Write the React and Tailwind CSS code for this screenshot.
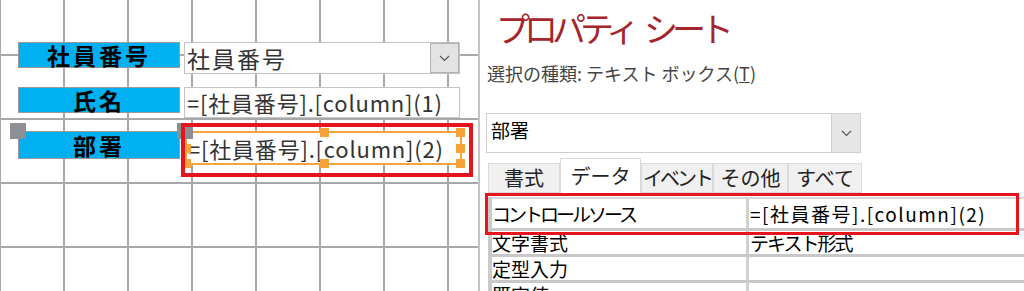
import React from 'react';

const Chevron = () => (
  <svg width="11" height="7" viewBox="0 0 11 7" fill="none">
    <path d="M1 1l4.5 4.5L10 1" stroke="#555" strokeWidth="1.2" />
  </svg>
);

const labelCls =
  'w-[162px] bg-[#00b0f0] border border-[#9a9a9a] flex items-center justify-center text-[23px] font-bold tracking-[3px] text-black';

const tabs = [
  { label: '書式', w: 'w-[72px]' },
  { label: 'データ', w: 'w-[81px]', active: true },
  { label: 'イベント', w: 'w-[72px]', tight: true },
  { label: 'その他', w: 'w-[75px]' },
  { label: 'すべて', w: 'w-[74px]' },
];

const rows = [
  { name: 'コントロールソース', value: '=[社員番号].[column](2)', h: 'h-[29px] leading-[29px]', first: true },
  { name: '文字書式', value: 'テキスト形式', h: 'h-[23px] leading-[23px]' },
  { name: '定型入力', value: '', h: 'h-[23px] leading-[23px]' },
  { name: '既定値', value: '', h: 'h-[23px] leading-[23px]' },
];

function Handle({ className }) {
  return <div className={`absolute w-[9px] h-[9px] bg-[#f7a33b] ${className}`} />;
}

export default function App() {
  return (
    <div className="w-[1024px] h-[291px] flex overflow-hidden bg-white font-['Noto_Sans_CJK_JP','Noto_Sans',sans-serif]">
      {/* form design canvas */}
      <div className="relative w-[478px] h-full shrink-0 bg-white [background-image:linear-gradient(to_right,#a8a8a8_2px,transparent_2px),linear-gradient(to_bottom,#a8a8a8_2px,transparent_2px)] [background-size:64px_64px] [background-position:63px_54px]">
        <div className="flex flex-col pt-[42px] pl-[18px]">
          <div className="flex items-start gap-[4px]">
            <div className={`${labelCls} h-[26px]`}>社員番号</div>
            <div className="w-[276px] h-[32px] bg-white border border-[#c4c4c4] flex items-center">
              <span className="flex-1 pl-[2px] text-[23px] tracking-[2px] text-[#333]">社員番号</span>
              <div className="w-[29px] h-full bg-[#e3e3e3] border border-[#b0b0b0] flex items-center justify-center">
                <Chevron />
              </div>
            </div>
          </div>
          <div className="flex items-start gap-[4px] mt-[13px]">
            <div className={`${labelCls} h-[26px]`}>氏名</div>
            <div className="w-[276px] h-[31px] bg-white border border-[#c4c4c4] flex items-center pl-[2px] text-[22px] tracking-[0.8px] text-[#333] whitespace-nowrap">
              =[社員番号].[column](1)
            </div>
          </div>
          <div className="flex items-start gap-[5px] mt-[13px]">
            <div className={`${labelCls} h-[28px]`}>部署</div>
            <div className="relative w-[277px] h-[34px] bg-white border-2 border-[#f6a53c] flex items-center pl-[1px] text-[22px] tracking-[0.8px] text-[#333] whitespace-nowrap">
              =[社員番号].[column](2)
              <Handle className="-top-[5px] left-[133px]" />
              <Handle className="-top-[5px] -right-[5px]" />
              <Handle className="top-[11px] -right-[5px]" />
              <Handle className="-bottom-[5px] -right-[5px]" />
              <Handle className="-bottom-[5px] left-[133px]" />
              <Handle className="top-[11px] -left-[5px] w-[5px]" />
              <Handle className="-bottom-[5px] -left-[5px] w-[5px]" />
            </div>
          </div>
        </div>
        <div className="absolute left-[10px] top-[123px] w-[16px] h-[16px] bg-[#8c8f94]" />
        <div className="absolute left-[177px] top-[123px] w-[16px] h-[16px] bg-[#8c8f94]" />
        <div className="absolute left-[181px] top-[123px] w-[292px] h-[54px] border-[4px] border-[#e8141d]" />
      </div>

      <div className="w-[2px] h-full bg-[#c4c4c4] shrink-0" />

      {/* property sheet */}
      <div className="relative flex-1 flex flex-col">
        <div className="shrink-0 pl-[16px] pt-[6px] text-[34px] leading-[44px] tracking-[-6px] text-[#a4262c] whitespace-nowrap">
          <span>プロパティ</span>
          <span className="ml-[10px]">シート</span>
        </div>
        <div className="shrink-0 pl-[7px] mt-[11px] text-[18px] leading-[24px] text-[#444]">
          選択の種類: テキスト ボックス(<span className="underline">T</span>)
        </div>
        <div className="shrink-0 ml-[6px] mt-[28px] w-[375px] h-[40px] border border-[#cfcfcf] flex">
          <span className="flex-1 pl-[4px] pt-[3px] text-[19px] leading-[26px] text-black">部署</span>
          <div className="w-[29px] h-full bg-[#e6e6e6] border-l border-[#cfcfcf] flex items-center justify-center">
            <Chevron />
          </div>
        </div>
        <div className="shrink-0 ml-[8px] mt-[5px] h-[35px] flex items-end">
          {tabs.map((t) => (
            <div
              key={t.label}
              className={`${t.w} flex items-center justify-center text-[20px] text-[#222] border border-[#dadada] ${
                t.active ? 'h-[35px] bg-white border-b-0' : 'h-[30px] bg-[#f0f0f0]'
              } ${t.tight ? 'tracking-[-3px]' : ''}`}
            >
              {t.label}
            </div>
          ))}
        </div>
        <div className="shrink-0 ml-[8px] mt-[4px] border-l-[4px] border-[#cacaca] flex flex-col">
          {rows.map((r) => (
            <div
              key={r.name}
              className={`shrink-0 flex border-b-[3px] border-[#c8c8c8] ${r.first ? 'border-t-[2px] border-t-[#d8d8d8]' : ''}`}
            >
              <div
                className={`w-[257px] ${r.h} border-r-[3px] border-[#d0d0d0] text-[19px] text-black whitespace-nowrap ${
                  r.first ? 'tracking-[-3px]' : ''
                }`}
              >
                {r.name}
              </div>
              <div
                className={`flex-1 ${r.h} pl-[1px] text-[19px] text-black whitespace-nowrap ${
                  r.first ? 'tracking-[1.5px]' : 'tracking-[-2px]'
                }`}
              >
                {r.value}
              </div>
            </div>
          ))}
        </div>
        <div className="absolute left-[5px] top-[193px] w-[534px] h-[42px] border-[3px] border-[#e8141d]" />
      </div>
    </div>
  );
}
